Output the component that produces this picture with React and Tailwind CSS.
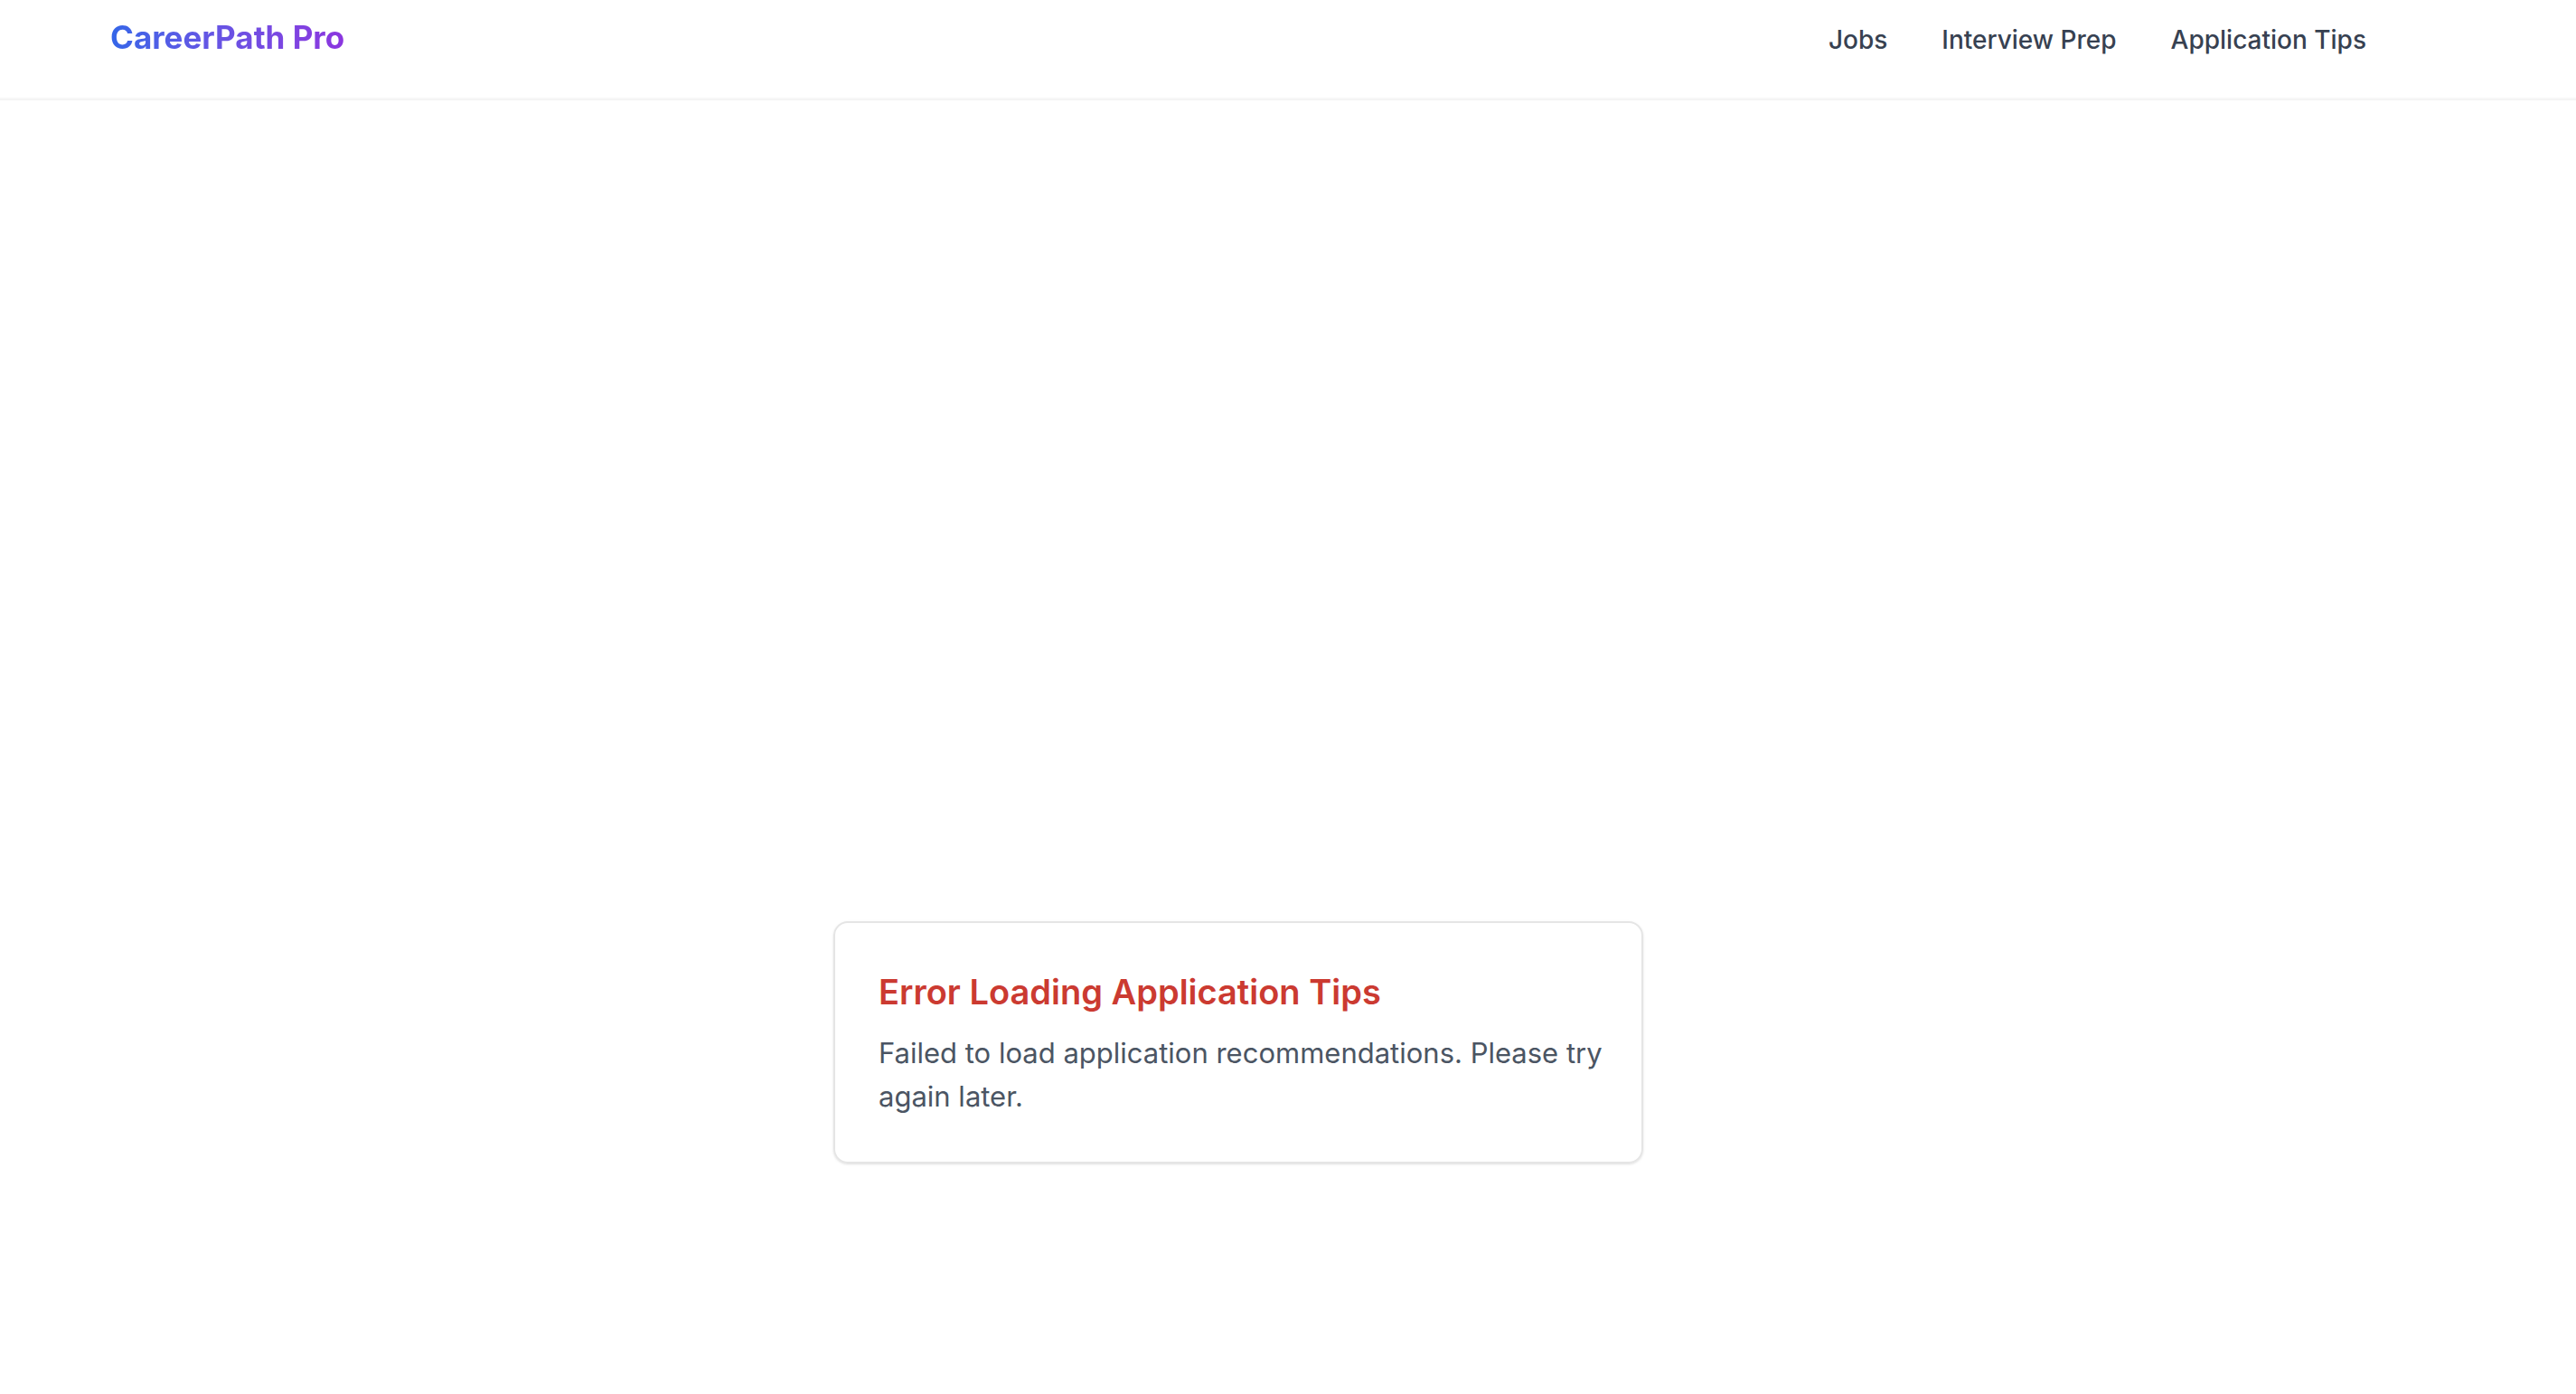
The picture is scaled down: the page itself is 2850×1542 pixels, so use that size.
export default function App() {
  const links = ["Jobs", "Interview Prep", "Application Tips"];
  return (
    <div className="min-h-screen flex flex-col bg-white font-['Inter',sans-serif]">
      <header className="h-[110px] border-b-2 border-[#f7f7f7] shadow-2xs pl-[122px] pr-[232px] flex justify-between items-start">
        <a href="#" className="mt-4 text-[35px] leading-[50px] font-bold bg-linear-to-r from-[#3366e8] to-[#8b35df] bg-clip-text text-transparent">CareerPath Pro</a>
        <nav className="mt-6 flex gap-[60px]">
          {links.map((l) => (
            <a key={l} href="#" className="text-[28px] leading-10 font-medium text-[#374151]">{l}</a>
          ))}
        </nav>
      </header>
      <main className="grow flex items-center justify-center pt-[654px]">
        <section className="w-[896px] rounded-2xl border-2 border-[#e5e5e5] shadow-sm pt-12 pb-12 pl-12 pr-10 mr-[110px]">
          <h1 className="text-[38px] leading-[56px] font-semibold text-[#cb3a31]">Error Loading Application Tips</h1>
          <p className="mt-4 text-[31px] leading-[48px] text-[#4b5563]">Failed to load application recommendations. Please try again later.</p>
        </section>
      </main>
    </div>
  );
}
